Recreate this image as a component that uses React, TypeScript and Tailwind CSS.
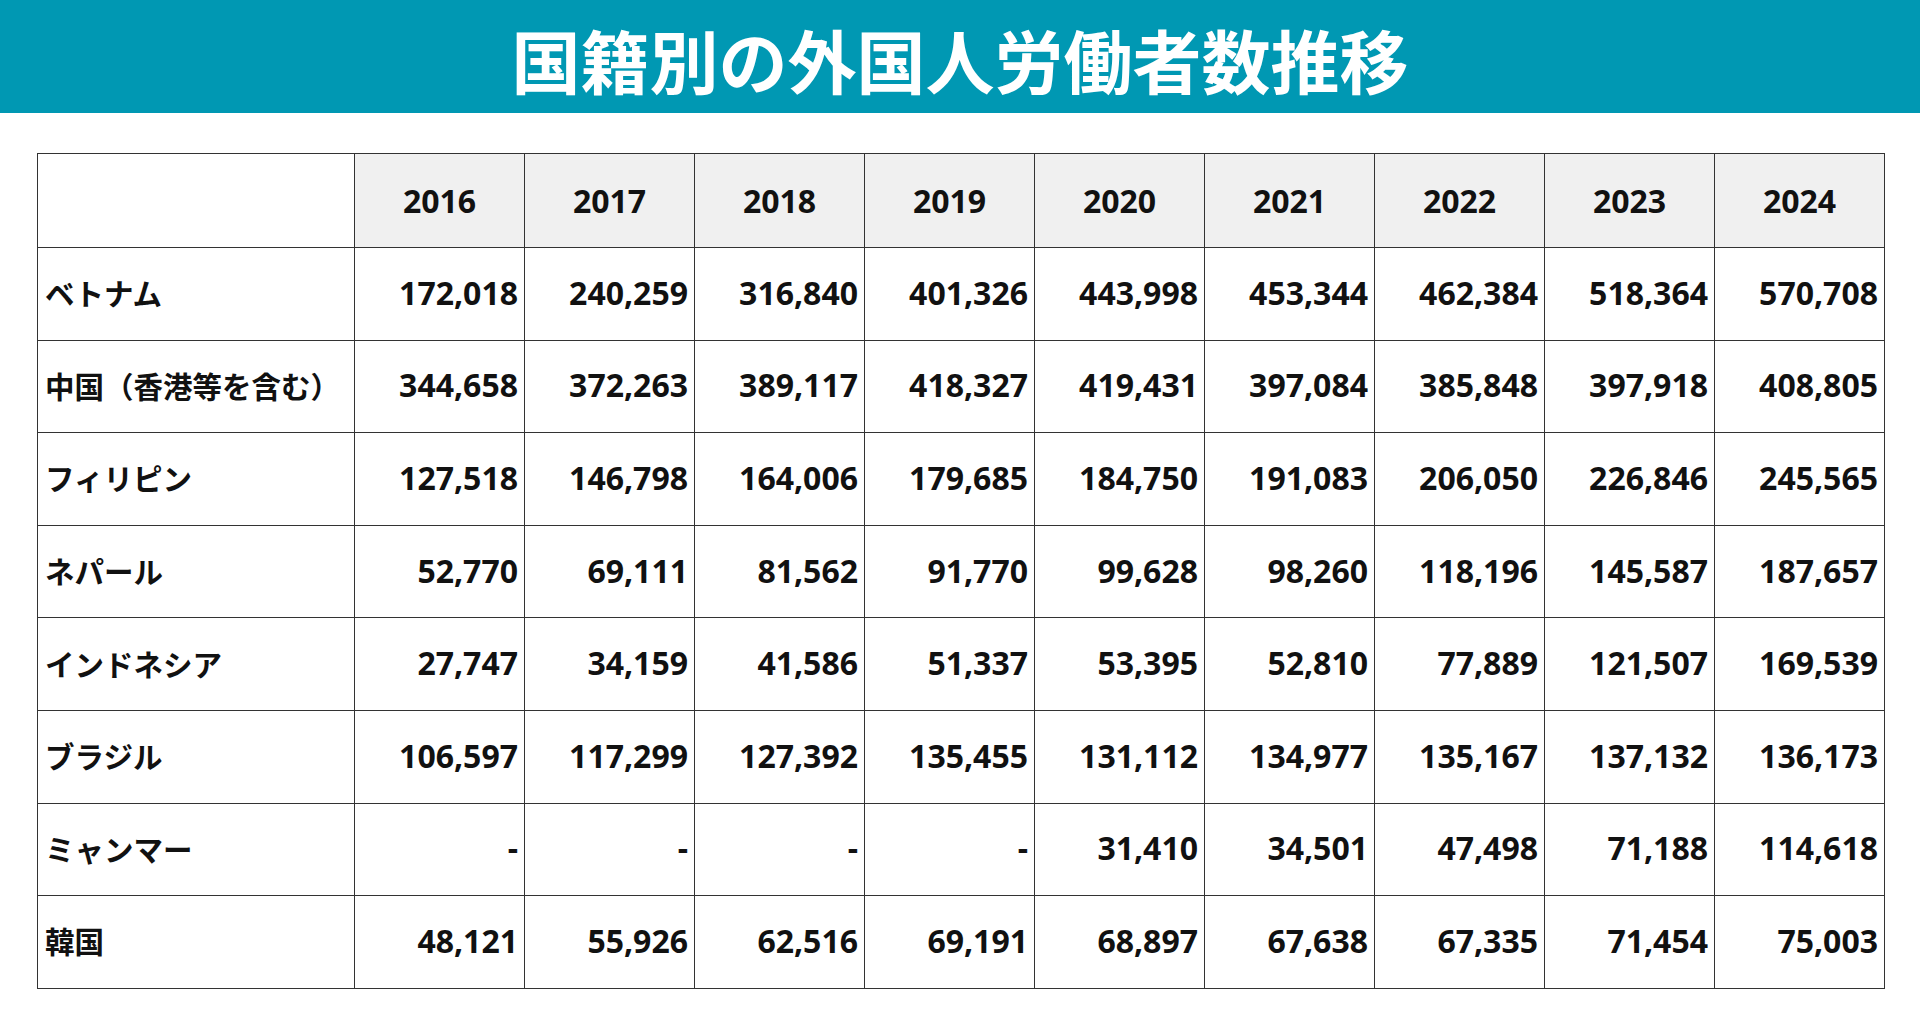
const YEARS = ['2016', '2017', '2018', '2019', '2020', '2021', '2022', '2023', '2024']

const ROWS: { name: string; values: string[] }[] = [
  { name: 'ベトナム', values: ['172,018', '240,259', '316,840', '401,326', '443,998', '453,344', '462,384', '518,364', '570,708'] },
  { name: '中国（香港等を含む）', values: ['344,658', '372,263', '389,117', '418,327', '419,431', '397,084', '385,848', '397,918', '408,805'] },
  { name: 'フィリピン', values: ['127,518', '146,798', '164,006', '179,685', '184,750', '191,083', '206,050', '226,846', '245,565'] },
  { name: 'ネパール', values: ['52,770', '69,111', '81,562', '91,770', '99,628', '98,260', '118,196', '145,587', '187,657'] },
  { name: 'インドネシア', values: ['27,747', '34,159', '41,586', '51,337', '53,395', '52,810', '77,889', '121,507', '169,539'] },
  { name: 'ブラジル', values: ['106,597', '117,299', '127,392', '135,455', '131,112', '134,977', '135,167', '137,132', '136,173'] },
  { name: 'ミャンマー', values: ['-', '-', '-', '-', '31,410', '34,501', '47,498', '71,188', '114,618'] },
  { name: '韓国', values: ['48,121', '55,926', '62,516', '69,191', '68,897', '67,638', '67,335', '71,454', '75,003'] },
]

const num = "font-['Open_Sans','Noto_Sans_CJK_JP',sans-serif] font-bold text-[32px] text-[#111]"
const jp = "font-['Noto_Sans_CJK_JP',sans-serif] font-bold text-[29.5px] text-[#111]"

export default function App() {
  return (
    <div className="w-[1920px] h-[1020px] bg-white">
      {/* タイトル帯 */}
      <div className="h-[113px] bg-[#0098b3] flex items-center justify-center pt-[6px]">
        <h1 className="font-['Noto_Sans_CJK_JP',sans-serif] font-bold text-[69px] leading-none text-white">
          国籍別の外国人労働者数推移
        </h1>
      </div>

      {/* 表 */}
      <div className="pl-[37px] pt-[40px]">
        <table className="table-fixed border-collapse border border-[#808080]">
          <colgroup>
            <col className="w-[317px]" />
            {YEARS.map(y => <col key={y} className="w-[170px]" />)}
          </colgroup>
          <thead>
            <tr className="h-[94px]">
              <th className="border border-[#333] bg-white" />
              {YEARS.map(y => (
                <th key={y} className={`border border-[#333] bg-[#f0f0f0] text-center ${num}`}>
                  {y}
                </th>
              ))}
            </tr>
          </thead>
          <tbody>
            {ROWS.map(r => (
              <tr key={r.name} className="h-[92.6px]">
                <td className={`border border-[#333] pl-[7px] pb-[3px] whitespace-nowrap ${jp}`}>{r.name}</td>
                {r.values.map((v, i) => (
                  <td key={i} className={`border border-[#333] text-right pr-[6px] pb-[2px] ${num}`}>
                    {v}
                  </td>
                ))}
              </tr>
            ))}
          </tbody>
        </table>
      </div>
    </div>
  )
}
